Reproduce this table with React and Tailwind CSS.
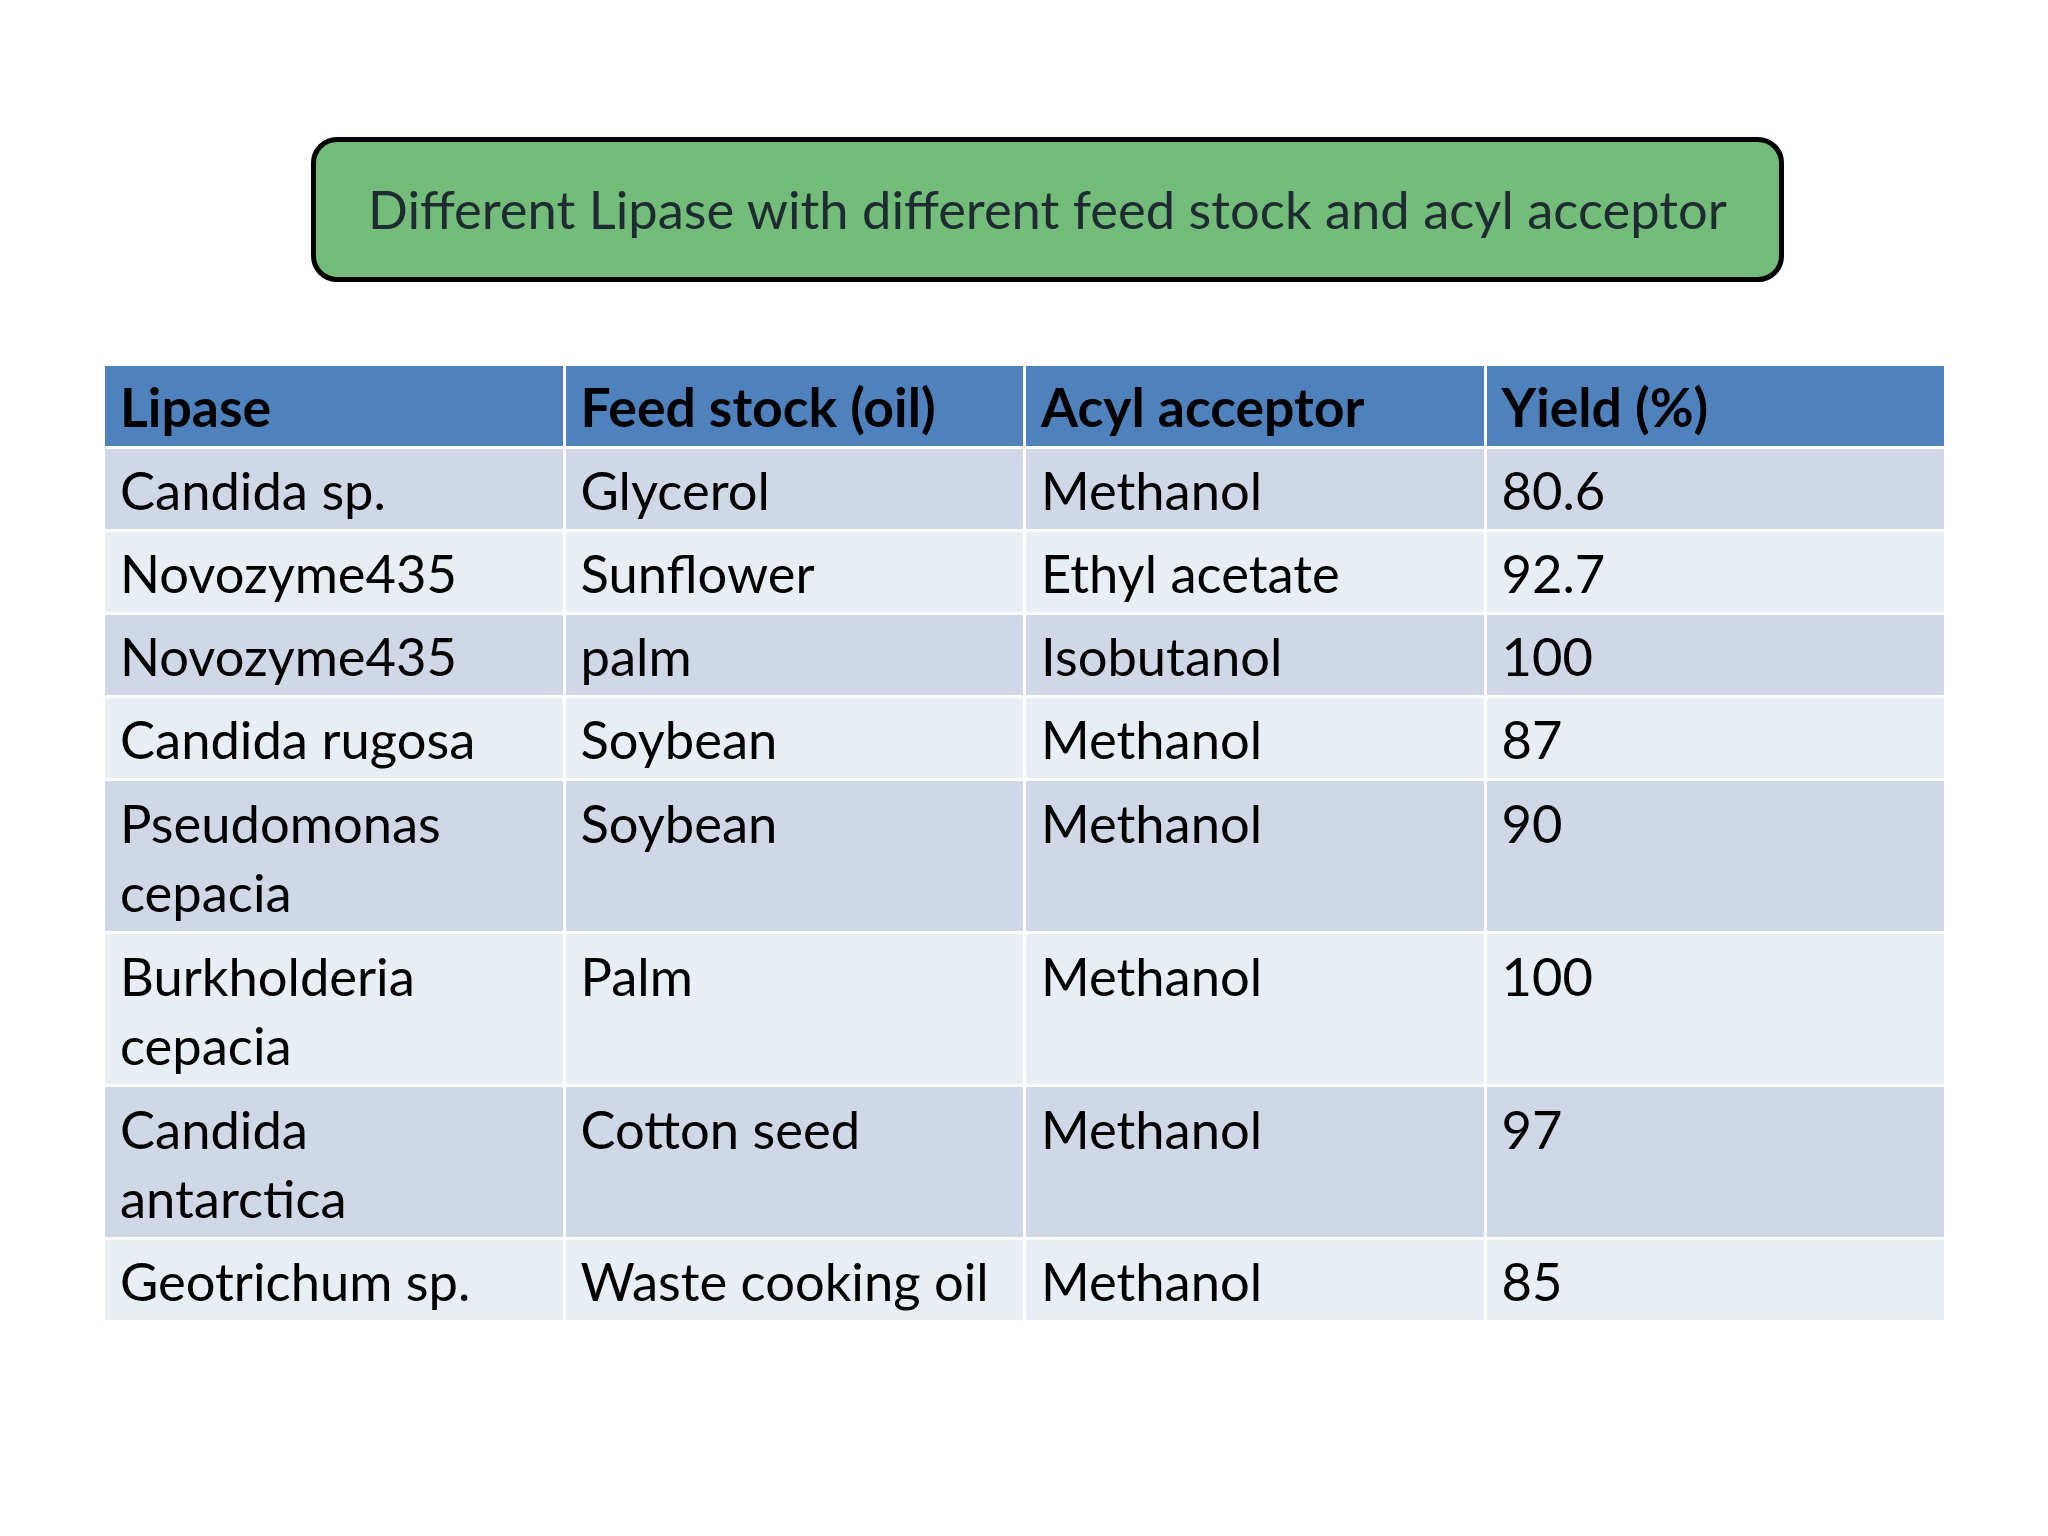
const header = ['Lipase', 'Feed stock (oil)', 'Acyl acceptor', 'Yield (%)']

const rows = [
  [['Candida sp.'], ['Glycerol'], ['Methanol'], ['80.6']],
  [['Novozyme435'], ['Sunflower'], ['Ethyl acetate'], ['92.7']],
  [['Novozyme435'], ['palm'], ['Isobutanol'], ['100']],
  [['Candida rugosa'], ['Soybean'], ['Methanol'], ['87']],
  [['Pseudomonas', 'cepacia'], ['Soybean'], ['Methanol'], ['90']],
  [['Burkholderia', 'cepacia'], ['Palm'], ['Methanol'], ['100']],
  [['Candida', 'antarctica'], ['Cotton seed'], ['Methanol'], ['97']],
  [['Geotrichum sp.'], ['Waste cooking oil'], ['Methanol'], ['85']],
]

export default function App() {
  return (
    <div className="h-[1536px] w-[2048px] overflow-hidden bg-white font-['Lato','Open_Sans',sans-serif]">
      <div className="pt-[137px]">
        <div className="ml-[311px] flex h-[145px] w-[1473px] items-center justify-center rounded-[26px] border-[5px] border-black bg-[#73bc79]">
          <span className="whitespace-nowrap text-[52.5px] leading-none text-[#1e2b31]">
            Different Lipase with different feed stock and acyl acceptor
          </span>
        </div>
      </div>

      <div className="ml-[105px] mt-[84px] grid w-[1839px] grid-cols-4 gap-[3px]">
        {header.map((h) => (
          <div key={h} className="h-[80px] bg-[#4f81bd] px-[15px] pt-[7px] text-[53.5px] font-bold leading-[66px] text-black whitespace-nowrap">
            {h}
          </div>
        ))}
        {rows.map((row, i) =>
          row.map((cell, j) => (
            <div
              key={i + '-' + j}
              className={
                'px-[15px] pt-[7px] pb-[5px] text-[52.5px] text-black whitespace-nowrap ' +
                (rows[i][0].length > 1 ? 'leading-[69px] ' : 'leading-[68px] ') +
                (i % 2 === 0 ? 'bg-[#d0d8e8]' : 'bg-[#e9edf4]')
              }
            >
              {cell.map((line) => (
                <div key={line}>{line}</div>
              ))}
            </div>
          ))
        )}
      </div>
    </div>
  )
}
